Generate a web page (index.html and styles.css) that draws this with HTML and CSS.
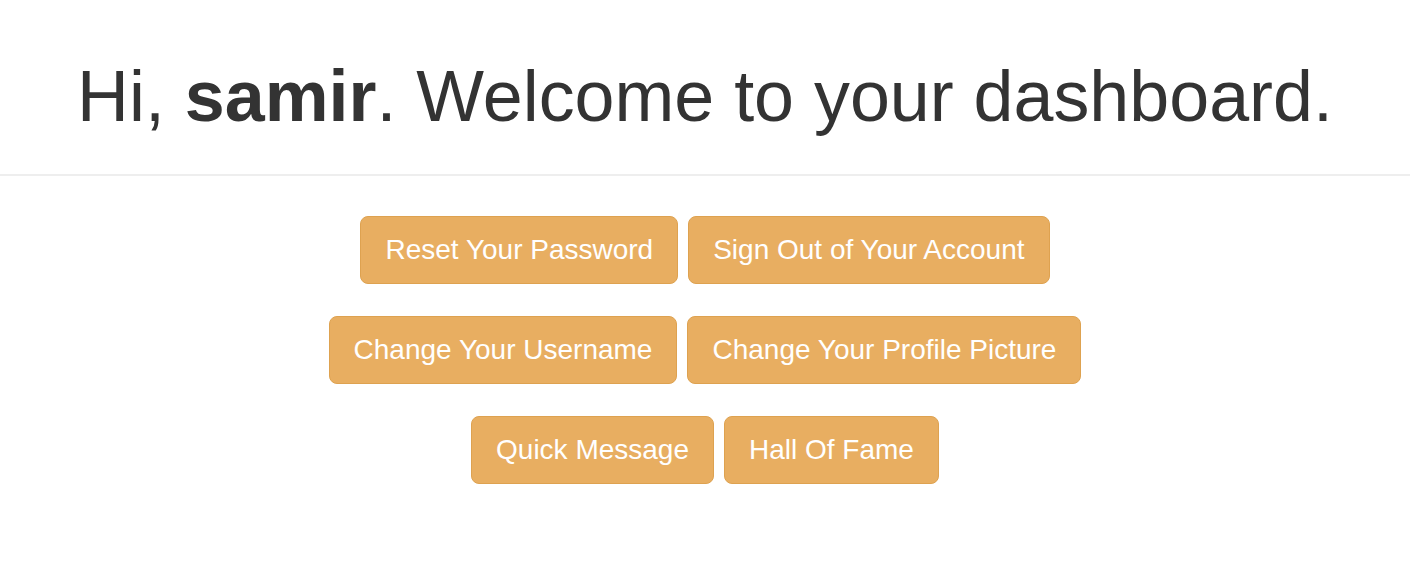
FILE: index.html
```html
<!DOCTYPE html>
<html lang="en">
<head>
<meta charset="utf-8">
<title>Dashboard</title>
<link rel="stylesheet" href="styles.css">
</head>
<body>
<header class="page-header">
  <h1 class="title">Hi, <b>samir</b>. Welcome to your dashboard.</h1>
</header>
<main class="actions">
  <div class="row">
    <a class="btn" href="#">Reset Your Password</a>
    <a class="btn" href="#">Sign Out of Your Account</a>
  </div>
  <div class="row">
    <a class="btn" href="#">Change Your Username</a>
    <a class="btn" href="#">Change Your Profile Picture</a>
  </div>
  <div class="row">
    <a class="btn" href="#">Quick Message</a>
    <a class="btn" href="#">Hall Of Fame</a>
  </div>
</main>
</body>
</html>
```
FILE: styles.css
```css
html, body {
  margin: 0;
  padding: 0;
  background: #ffffff;
}
body {
  font-family: "Liberation Sans", Arial, Helvetica, sans-serif;
  color: #333333;
}
.page-header {
  padding: 57px 0 38px;
  border-bottom: 2px solid #eeeeee;
  text-align: center;
}
.title {
  margin: 0;
  font-size: 71.8px;
  line-height: 79px;
  font-weight: 400;
  color: #333333;
}
.title b {
  font-weight: 700;
}
.actions {
  display: flex;
  flex-direction: column;
  gap: 32px;
  padding-top: 40px;
}
.row {
  display: flex;
  justify-content: center;
  gap: 10px;
}
.btn {
  display: block;
  padding: 15px 24px;
  font-size: 28px;
  line-height: 36px;
  color: #ffffff;
  background: #e8ae61;
  border: 1px solid #dea250;
  border-radius: 8px;
  text-decoration: none;
  white-space: nowrap;
}
```
